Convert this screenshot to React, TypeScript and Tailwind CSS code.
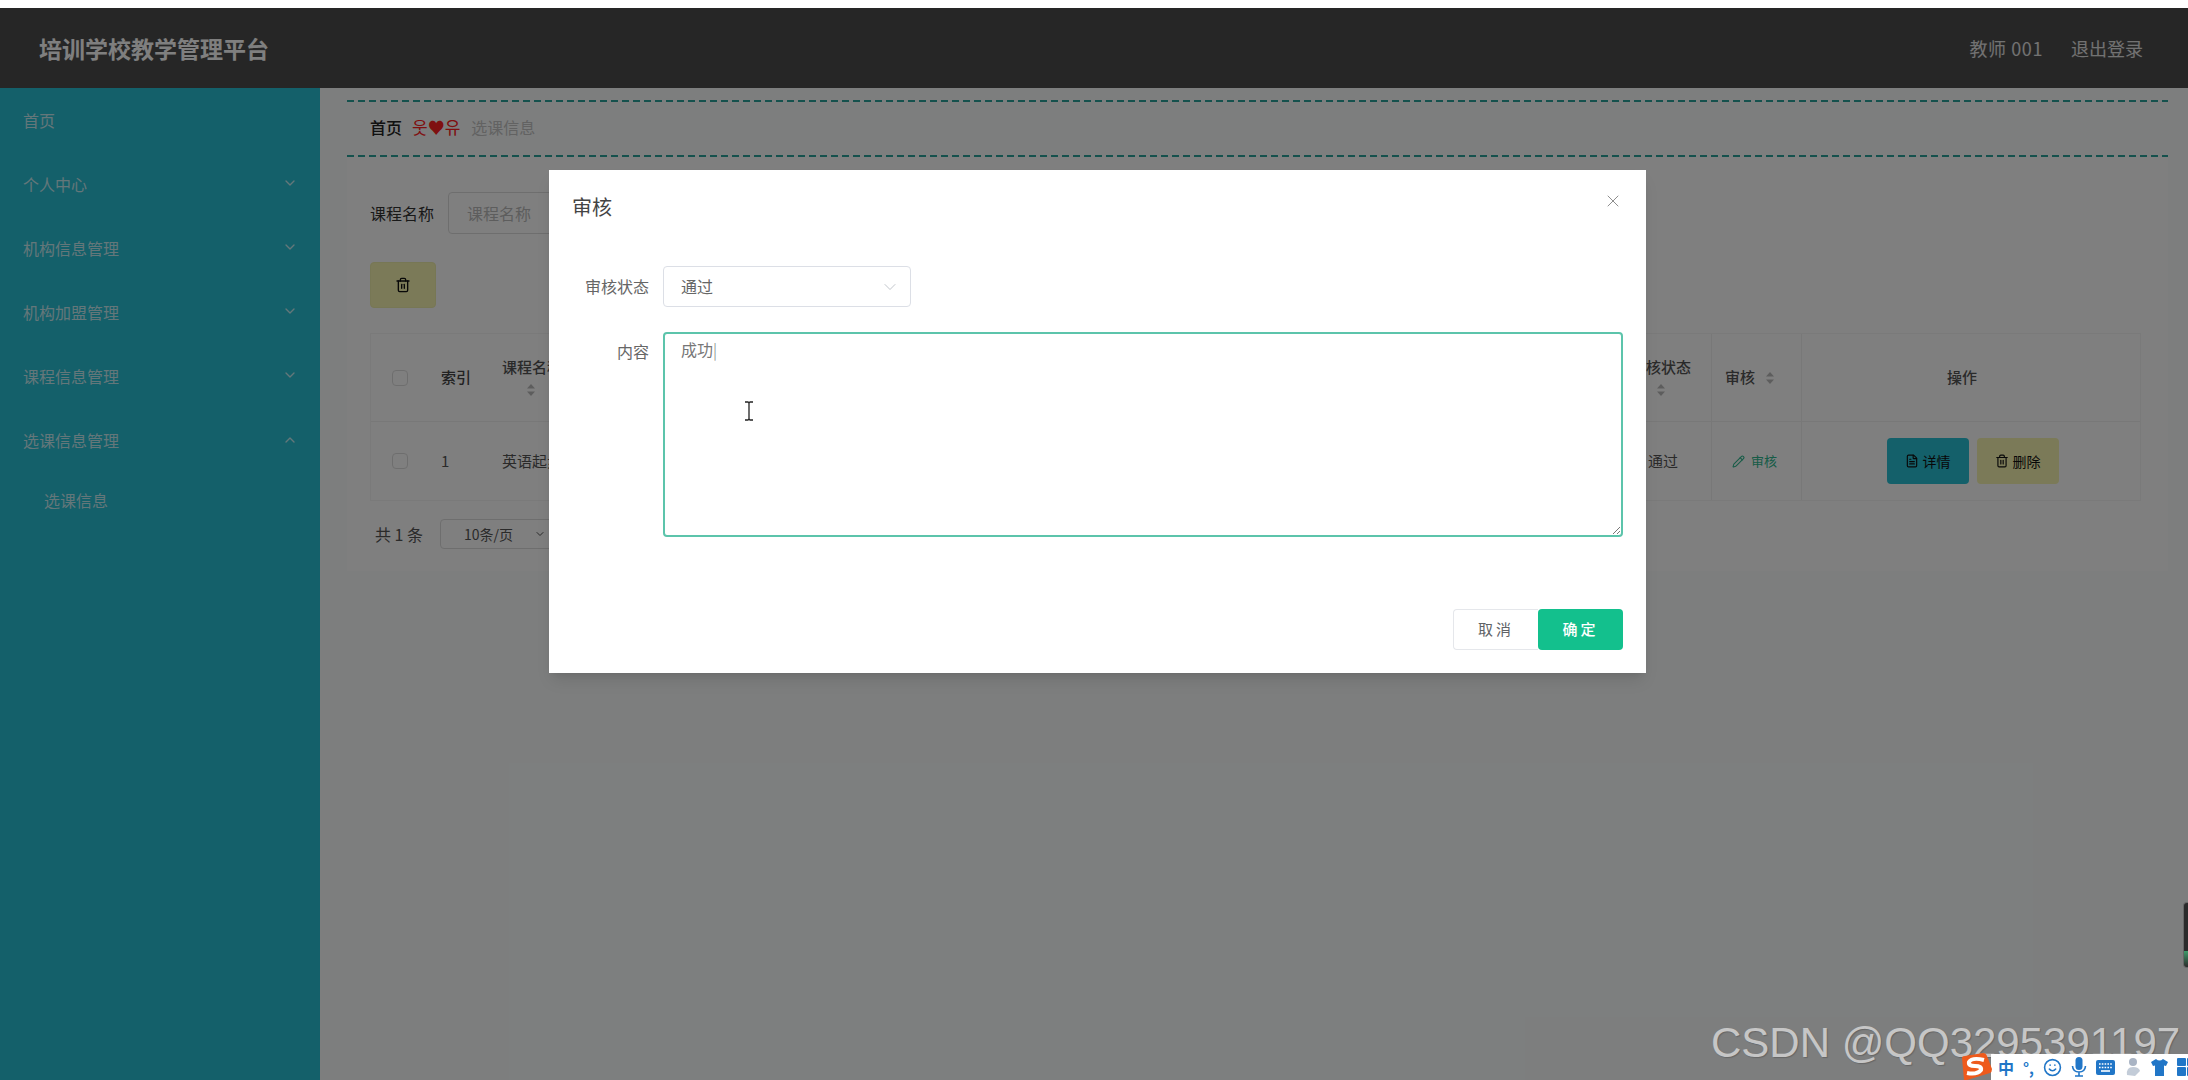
import { ChevronDown, ChevronUp, X, Trash2, FileText, Pencil, Smile } from "lucide-react";

const cjk = "font-['Microsoft_YaHei','Noto_Sans_CJK_SC','Liberation_Sans',sans-serif]";

const menu = ["个人中心", "机构信息管理", "机构加盟管理", "课程信息管理"];

function SortIcon() {
    return (
        <svg width="10" height="14" viewBox="0 0 10 14" className="shrink-0">
            <path d="M5 1 L9 5.5 H1 Z" fill="#bbbbbb" />
            <path d="M5 13 L9 8.5 H1 Z" fill="#bbbbbb" />
        </svg>
    );
}

function Dashes() {
    return <div className="h-[2px] w-full bg-[repeating-linear-gradient(90deg,#2aa39b_0,#2aa39b_7px,transparent_7px,transparent_11px)]" />;
}

export default function App() {
    return (
        <div className={`w-[2188px] h-[1080px] overflow-hidden bg-white pt-2 ${cjk}`}>
            <div className="relative h-[1072px] flex flex-col bg-[#fafdfd] overflow-hidden">
                <header className="h-20 shrink-0 flex items-center justify-between bg-[#4c4c4c] pl-[39px] pr-[45px] text-white">
                    <h1 className="text-[23px] font-bold">培训学校教学管理平台</h1>
                    <div className="flex items-center gap-7 text-[18px] text-white/85">
                        <span className="tracking-[0.6px]">教师 001</span>
                        <a>退出登录</a>
                    </div>
                </header>

                <div className="flex flex-1 min-h-0">
                    <aside className="w-80 shrink-0 bg-[#28c0d4] text-white/75 text-base">
                        <div className="h-16 flex items-center pl-[23px]">首页</div>
                        {menu.map((m) => (
                            <div key={m} className="h-16 flex items-center justify-between pl-[23px] pr-[22px]">
                                <span>{m}</span>
                                <ChevronDown size={16} className="-mt-[3px]" />
                            </div>
                        ))}
                        <div className="h-16 flex items-center justify-between pl-[23px] pr-[22px]">
                            <span>选课信息管理</span>
                            <ChevronUp size={16} />
                        </div>
                        <div className="h-14 flex items-center pl-[44px]">选课信息</div>
                    </aside>

                    <main className="flex-1 pt-3 pl-[27px] pr-5 text-base">
                        <Dashes />
                        <div className="h-[53px] flex items-center pl-[23px] pb-[3px]">
                            <span className="font-medium text-[#222222]">首页</span>
                            <span className="ml-[10px] text-[17px] text-[#ff2020] font-['Noto_Sans_CJK_KR',sans-serif]">웃♥유</span>
                            <span className="ml-[11px] text-[#c4c4c4]">选课信息</span>
                        </div>
                        <Dashes />

                        <div className="h-[414px] bg-white pl-[23px] pr-[27px] pt-[35px]">
                            <div className="flex items-center gap-[14px] h-[42px]">
                                <span className="text-[#333333]">课程名称</span>
                                <div className="w-[250px] h-[42px] flex items-center pl-[18px] border border-[#dddddd] rounded text-[#bbbbbb]">课程名称</div>
                            </div>

                            <button className="mt-[28px] w-[66px] h-[46px] flex items-center justify-center bg-[#f6f4b0] border border-[#eeeeaa] rounded text-[#111111]">
                                <Trash2 size={16} />
                            </button>

                            <div className="mt-[25px] border border-[#f4f4f4] text-[#555555]">
                                <div className="h-[88px] grid grid-cols-[58px_55px_1127px_100px_91px_1fr] items-center border-b border-[#f0f0f0] font-medium text-[15px]">
                                    <div className="flex justify-center"><span className="w-4 h-4 border border-[#dddddd] rounded-sm" /></div>
                                    <div className="pl-3 text-[#444444]">索引</div>
                                    <div className="pl-[18px] flex flex-col items-start gap-1 -mt-[2px]"><span>课程名称</span><span className="ml-6"><SortIcon /></span></div>
                                    <div className="pl-5 flex flex-col gap-1 -mt-[2px]"><span>审核状态</span><span className="ml-[25px]"><SortIcon /></span></div>
                                    <div className="pl-[13px] flex items-center gap-[10px] h-full border-x border-[#f0f0f0]"><span>审核</span><SortIcon /></div>
                                    <div className="text-center pr-[18px]">操作</div>
                                </div>
                                <div className="h-[78px] grid grid-cols-[58px_55px_1127px_100px_91px_1fr] items-center text-[15px]">
                                    <div className="flex justify-center"><span className="w-4 h-4 border border-[#dddddd] rounded-sm" /></div>
                                    <div className="pl-3">1</div>
                                    <div className="pl-[18px]">英语起步课程</div>
                                    <div className="pl-[37px]">通过</div>
                                    <div className="pl-5 flex items-center gap-[6px] h-full border-x border-[#f0f0f0] text-[#2fb88f] text-[13px]"><Pencil size={13} />审核</div>
                                    <div className="flex justify-center gap-2 pl-[3px] text-[14px] text-[#111111]">
                                        <button className="w-[82px] h-[46px] flex items-center justify-center gap-1 bg-[#28c0d4] rounded"><FileText size={14} />详情</button>
                                        <button className="w-[82px] h-[46px] flex items-center justify-center gap-1 bg-[#f6f4b0] rounded"><Trash2 size={14} />删除</button>
                                    </div>
                                </div>
                            </div>

                            <div className="mt-[18px] flex items-center gap-[17px] text-[#555555] pl-[5px]">
                                <span>共 1 条</span>
                                <div className="w-[120px] h-[30px] flex items-center justify-between pl-[23px] pr-[13px] border border-[#dddddd] rounded-sm text-[14px]">
                                    <span>10条/页</span>
                                    <ChevronDown size={12} />
                                </div>
                            </div>
                        </div>
                    </main>
                </div>

                {/* mask */}
                <div className="absolute inset-0 bg-black/50" />

                {/* dialog */}
                <div className="absolute left-[549px] top-[162px] w-[1097px] h-[503px] bg-white shadow-lg flex flex-col text-[#666666]">
                    <div className="h-[96px] flex items-start justify-between pl-[23px] pr-[23px] pt-[22px]">
                        <span className="text-[20px] text-[#444444]">审核</span>
                        <X size={20} strokeWidth={1} className="text-[#777777] -mt-[1px]" />
                    </div>
                    <div className="flex items-center">
                        <label className="w-[100px] text-right text-base pb-[2px]">审核状态</label>
                        <div className="ml-[14px] w-[248px] h-[41px] flex items-center justify-between pl-[17px] pr-[10px] border border-[#dcdfe6] rounded text-base">
                            <span className="pb-[2px]">通过</span>
                            <ChevronDown size={20} strokeWidth={1} className="text-[#b5b9c0]" />
                        </div>
                    </div>
                    <div className="flex items-start mt-[25px]">
                        <label className="w-[100px] text-right text-base pt-[7px]">内容</label>
                        <div className="relative ml-[14px] w-[960px] h-[205px] pl-4 pt-[3px] border-2 border-[#5cc4ab] rounded text-base text-[#777777]">
                            <span>成功</span><span className="font-light">|</span>
                            <svg width="10" height="10" viewBox="0 0 10 10" className="absolute right-0 bottom-0">
                                <path d="M9 2 L2 9 M9 6 L6 9" stroke="#777777" strokeWidth="1" />
                            </svg>
                            <svg width="12" height="20" viewBox="0 0 12 20" className="absolute left-[78px] top-[67px]">
                                <path d="M2 1 H5 Q6 1 6 3 V17 Q6 19 5 19 H2 M10 1 H7 Q6 1 6 3 M6 17 Q6 19 7 19 H10" fill="none" stroke="#222222" strokeWidth="1.3" />
                            </svg>
                        </div>
                    </div>
                    <div className="mt-[72px] flex justify-end pr-[23px]">
                        <button className="w-[85px] h-[41px] border border-[#e5e7eb] border-r-0 rounded-l text-[15px] tracking-[3px] text-[#606266]">取消</button>
                        <button className="w-[85px] h-[41px] bg-[#13c08d] rounded text-[15px] tracking-[3px] text-white font-medium">确定</button>
                    </div>
                </div>

                {/* floating widget at the right edge */}
                <div className="absolute right-0 top-[894px] w-[5px] h-[66px] bg-[linear-gradient(180deg,#2b2b2b_0,#2b2b2b_75%,#3f9a6a_75%,#2b2b2b_100%)] border-l border-y border-[#666666] rounded-l" />

                {/* watermark */}
                <div className="absolute left-[1711px] top-[1011px] text-[42px] leading-[48px] text-[#c6c6c6] font-['Liberation_Sans',sans-serif] [text-shadow:1px_1px_1px_#666666] whitespace-nowrap">
                    CSDN @QQ3295391197
                </div>

                {/* input method toolbar */}
                <div className="absolute right-0 bottom-0 w-[197px] h-[26px] bg-white flex items-center gap-[9px] pl-[7px] text-[#2176c7]">
                    <span className="w-4 text-[16px] leading-none font-bold">中</span>
                    <span className="w-[14px] text-[15px] leading-none font-bold">°,</span>
                    <Smile size={19} className="shrink-0" />
                    <svg width="16" height="20" viewBox="0 0 16 20" className="shrink-0">
                        <rect x="4.5" y="0" width="7" height="13" rx="3.5" fill="#2176c7" />
                        <path d="M1.5 9 Q2 15 8 15 Q14 15 14.5 9 M8 15 V19 M4 19 H12" fill="none" stroke="#2176c7" strokeWidth="1.6" />
                    </svg>
                    <svg width="19" height="15" viewBox="0 0 19 15" className="shrink-0">
                        <rect width="19" height="15" rx="2" fill="#2176c7" />
                        <path d="M3 4 H16 M3 7.5 H16" stroke="#ffffff" strokeWidth="1.6" strokeDasharray="1.6 1.2" />
                        <path d="M5 11 H14" stroke="#ffffff" strokeWidth="1.6" />
                    </svg>
                    <svg width="18" height="20" viewBox="0 0 18 20" className="shrink-0">
                        <circle cx="9" cy="5" r="4" fill="#a9b4c4" />
                        <path d="M3 18 Q2 10 9 10 Q15 10 16 14 L11 19 Z" fill="#c3ccd8" />
                    </svg>
                    <svg width="17" height="17" viewBox="0 0 17 17" className="shrink-0">
                        <path d="M5 0 Q8.5 3 12 0 L17 3 L15 7 L13 6.5 V17 H4 V6.5 L2 7 L0 3 Z" fill="#2176c7" />
                    </svg>
                    <svg width="19" height="18" viewBox="0 0 19 18" className="shrink-0">
                        <rect width="9" height="8" rx="1" fill="#2176c7" />
                        <rect x="10" width="9" height="8" rx="1" fill="#2176c7" />
                        <rect y="9" width="9" height="9" rx="1" fill="#2176c7" />
                        <rect x="10" y="9" width="9" height="9" rx="1" fill="#2176c7" />
                    </svg>
                </div>
                <svg width="33" height="27" viewBox="0 0 33 27" className="absolute left-[1959px] bottom-0">
                    <path d="M3 5 Q3 3 6 3 L24 0 Q27 0 28 3 L33 16 Q33 19 31 20 L8 27 H5 Z" fill="#ee5a1c" />
                    <path d="M25 7 Q13 4 10 9 Q9 13 16 13 Q23 13 22 17 Q18 22 8 20" fill="none" stroke="#ffffff" strokeWidth="4" />
                </svg>
            </div>
        </div>
    );
}
